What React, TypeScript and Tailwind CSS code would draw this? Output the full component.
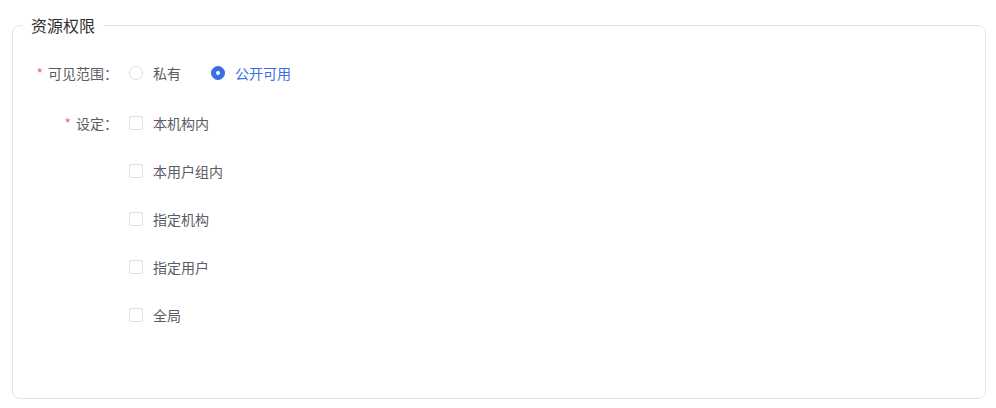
const scopeOptions = [
    { label: "私有", checked: false },
    { label: "公开可用", checked: true },
];

const settingOptions = ["本机构内", "本用户组内", "指定机构", "指定用户", "全局"];

function Radio({ label, checked }: { label: string; checked: boolean }) {
    return (
        <label className="flex items-center mr-[30px] cursor-pointer">
            {checked ? (
                <span className="w-[14px] h-[14px] rounded-full bg-[#3a6ee6] border border-[#3a6ee6] flex items-center justify-center">
                    <span className="w-[4px] h-[4px] rounded-full bg-white" />
                </span>
            ) : (
                <span className="w-[14px] h-[14px] rounded-full bg-white border border-[#dcdfe6]" />
            )}
            <span className={`ml-[10px] text-[14px] ${checked ? "text-[#3a6ee6]" : "text-[#5a5c63]"}`}>
                {label}
            </span>
        </label>
    );
}

function Checkbox({ label }: { label: string }) {
    return (
        <label className="flex items-center h-8 cursor-pointer">
            <span className="w-[14px] h-[14px] rounded-[2px] bg-white border border-[#dcdfe6]" />
            <span className="ml-[10px] text-[14px] text-[#5a5c63]">{label}</span>
        </label>
    );
}

function FormLabel({ text }: { text: string }) {
    return (
        <div className="w-[116px] shrink-0 h-8 flex items-center justify-end pr-[11px] text-[14px] text-[#5a5c63]">
            <span className="text-[#f56c6c] mr-[5px]">*</span>
            {text}：
        </div>
    );
}

export default function App() {
    return (
        <div
            className="w-[996px] h-[408px] bg-white pt-3 pl-3 pr-[10px]"
            style={{ fontFamily: '"Noto Sans CJK SC", "Noto Sans", sans-serif' }}
        >
            <fieldset className="h-[387px] border border-[#e3e3f0] rounded-[8px] p-0 m-0">
                <legend className="ml-[10px] px-2 text-[16px] leading-[26px] text-[#303133]">资源权限</legend>

                <div className="mt-[19px] flex items-center">
                    <FormLabel text="可见范围" />
                    <div className="flex items-center">
                        {scopeOptions.map((o) => (
                            <Radio key={o.label} label={o.label} checked={o.checked} />
                        ))}
                    </div>
                </div>

                <div className="mt-[18px] flex items-start">
                    <FormLabel text="设定" />
                    <div className="flex flex-col gap-4">
                        {settingOptions.map((s) => (
                            <Checkbox key={s} label={s} />
                        ))}
                    </div>
                </div>
            </fieldset>
        </div>
    );
}
